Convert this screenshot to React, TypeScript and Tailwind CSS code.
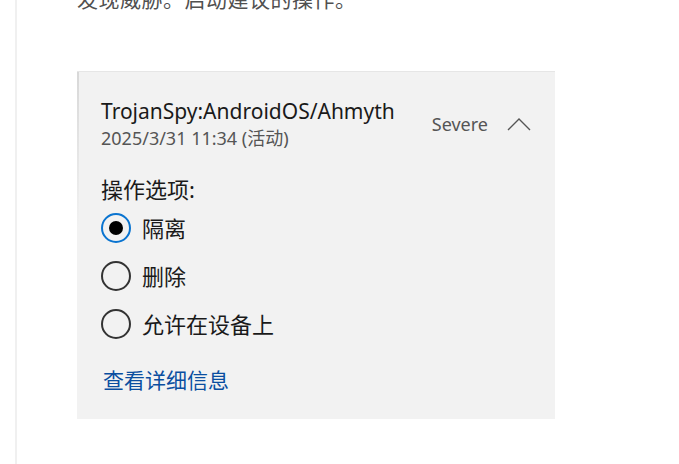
import React from "react";

const font = { fontFamily: '"Noto Sans", "Noto Sans CJK SC", sans-serif' };

function Radio({ label, checked }: { label: string; checked?: boolean }) {
  return (
    <div className="flex items-center h-[48px]">
      <div
        className={
          checked
            ? "w-[30px] h-[30px] rounded-full border-2 border-[#0a74d0] flex items-center justify-center"
            : "w-[30px] h-[30px] rounded-full border-2 border-[#333333]"
        }
      >
        {checked && <div className="w-[14px] h-[14px] rounded-full bg-black" />}
      </div>
      <span className="ml-[11px] text-[22px] leading-[28px] text-[#1a1a1a]">{label}</span>
    </div>
  );
}

export default function App() {
  return (
    <div className="w-[679px] h-[464px] bg-white overflow-hidden flex" style={font}>
      <div className="ml-[15px] w-[2px] h-full bg-[#f0f0f0]" />
      <div className="pl-[60px] flex flex-col">
        <div className="-mt-[15px] text-[21px] leading-[28px] text-[#505050] tracking-[0.5px] whitespace-nowrap">
          发现威胁。启动建议的操作。
        </div>
        <div className="mt-[58px] w-[478px] h-[348px] bg-[#f2f2f2] bg-[linear-gradient(to_bottom,#d8d8d8,#f2f2f2_45%)] bg-[length:2px_100%] bg-no-repeat border-t border-[#e6e6e6] pl-[24px] pr-[24px] pt-[25px]">
          <div className="flex items-center justify-between">
            <div className="flex flex-col">
              <div className="text-[21px] leading-[28px] text-[#1a1a1a]">TrojanSpy:AndroidOS/Ahmyth</div>
              <div className="text-[18px] leading-[24px] text-[#555555] mt-[1px]">2025/3/31 11:34 (活动)</div>
            </div>
            <div className="flex items-center">
              <span className="text-[18px] leading-[24px] text-[#555555]">Severe</span>
              <svg className="ml-[19px]" width="24" height="14" viewBox="0 0 24 14" fill="none">
                <path d="M1 13 L12 2 L23 13" stroke="#555555" strokeWidth="1.4" />
              </svg>
            </div>
          </div>
          <div className="mt-[25px] text-[22px] leading-[28px] text-[#1a1a1a]">操作选项:</div>
          <div className="flex flex-col mt-[1px]">
            <Radio label="隔离" checked />
            <Radio label="删除" />
            <Radio label="允许在设备上" />
          </div>
          <div className="mt-[18px] ml-[2px] text-[21px] leading-[28px] text-[#0a4ea0]">查看详细信息</div>
        </div>
      </div>
    </div>
  );
}
